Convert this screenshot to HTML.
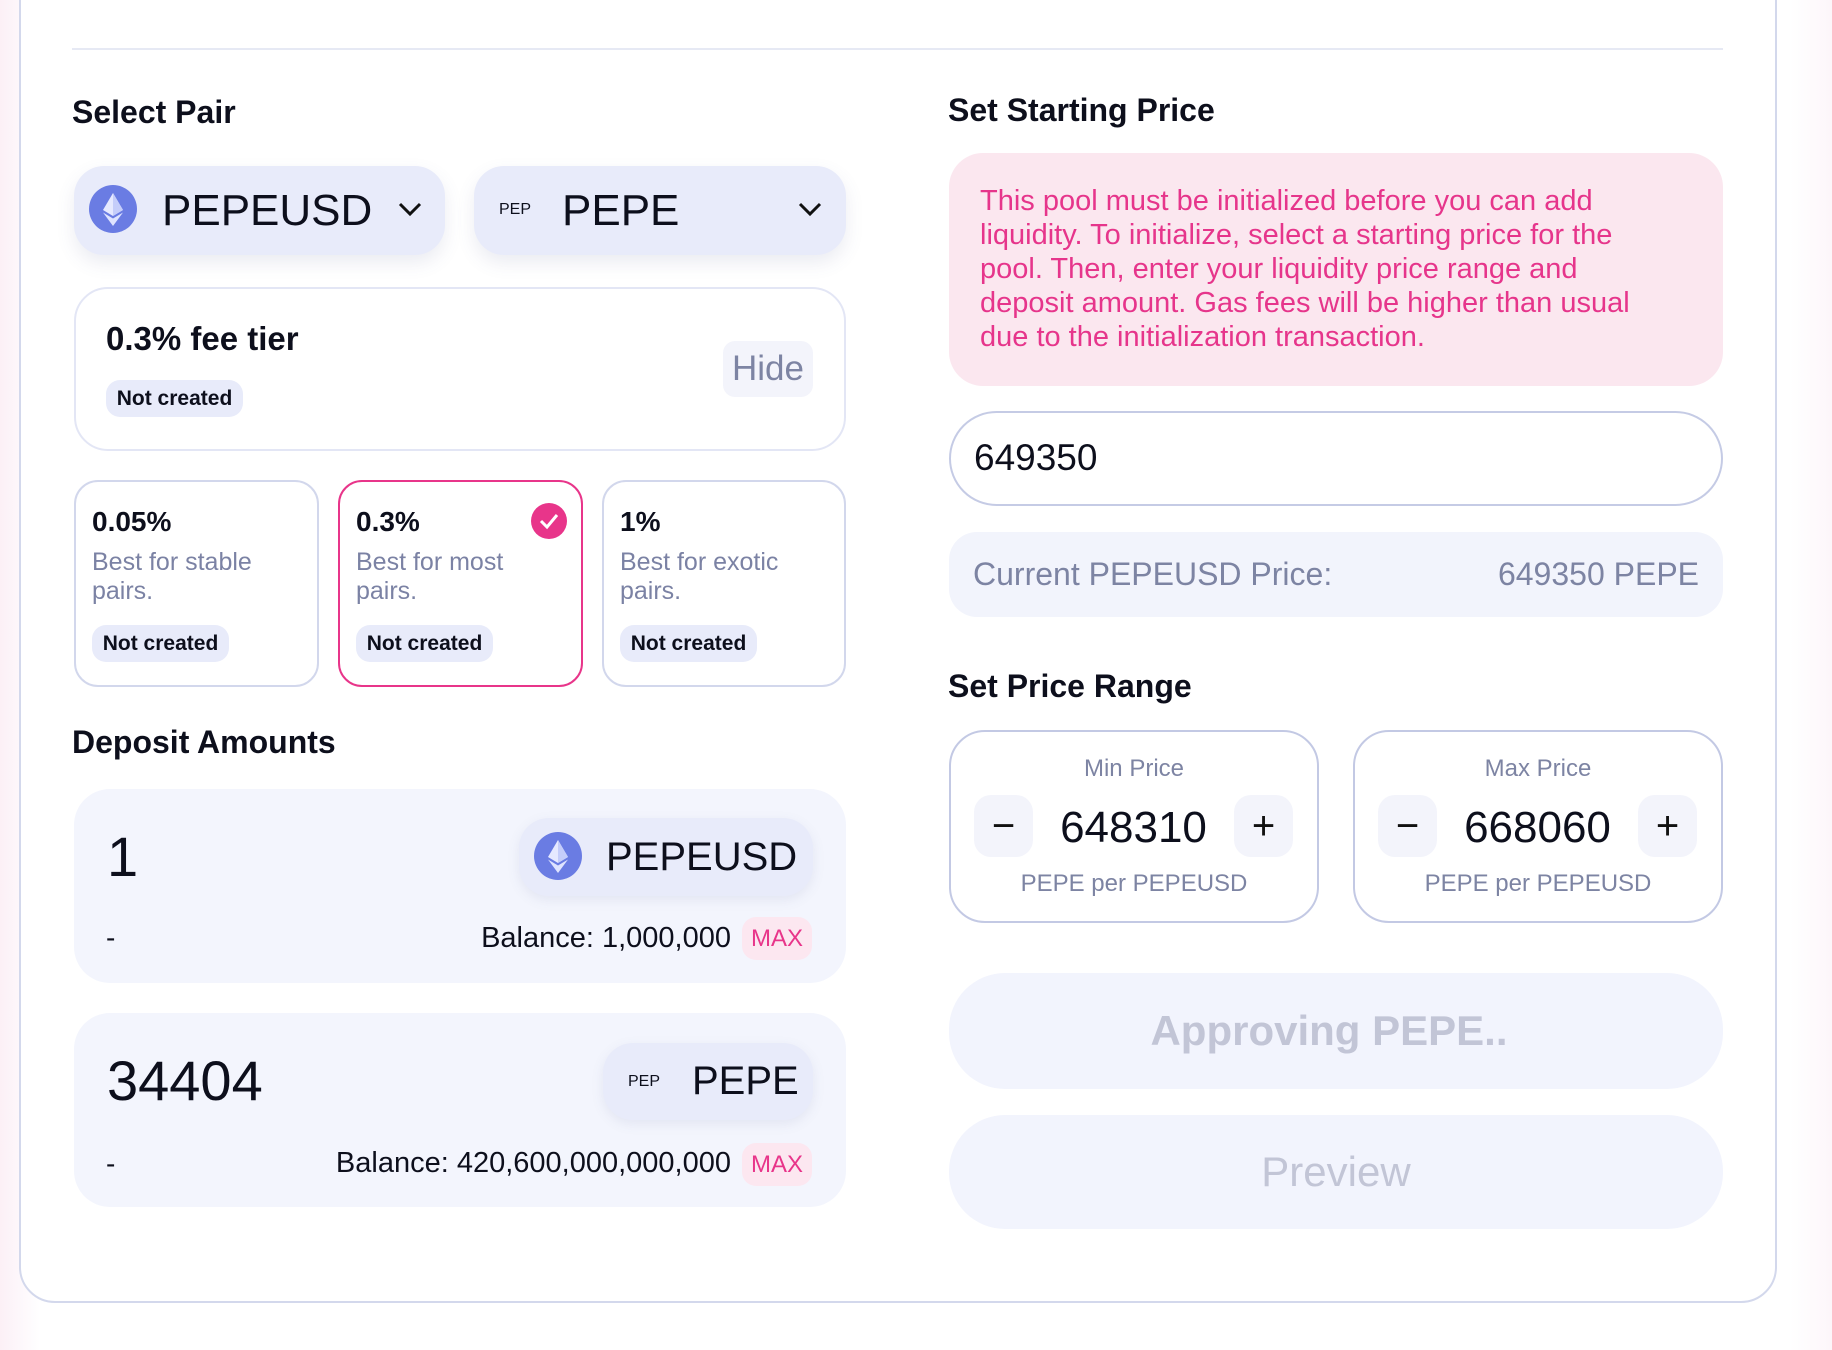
<!DOCTYPE html>
<html><head><meta charset="utf-8"><style>
*{box-sizing:border-box;margin:0;padding:0}
body{width:1832px;height:1350px;position:relative;overflow:hidden;font-family:"Liberation Sans",sans-serif;background:linear-gradient(90deg,#fcf0f6 0,#fdf7fb 19px,#fff 40px,#fff 1790px,#fdf6fa 100%);color:#0d0f1c}
.a{position:absolute}
.card{left:19px;top:-40px;width:1758px;height:1343px;border:2px solid #d3d8ec;border-radius:36px;background:#fff}
.h{font-size:32px;font-weight:700;color:#0d0f1c}
.sel{background:#e8ebfa;border-radius:30px;box-shadow:0 8px 18px rgba(90,100,150,.12)}
.pill{background:#e8ebfa;border-radius:14px;font-size:21px;font-weight:700;display:flex;align-items:center;justify-content:center}
.fee{border:2px solid #d2d7ec;border-radius:24px;background:#fff}
.fee .t{position:absolute;left:16px;top:24px;font-size:28px;font-weight:700}
.fee .d{position:absolute;left:16px;top:66px;font-size:25px;line-height:29px;color:#7b82a4}
.fee .pill{position:absolute;left:16px;top:143px;width:137px;height:37px}
.dep{background:#f3f5fd;border-radius:36px}
.max{background:#fce7f0;color:#e8358a;border-radius:14px;font-size:24px;display:flex;align-items:center;justify-content:center}
.grey{color:#7d84a3}
.rb{border:2px solid #c3c9e4;border-radius:36px;background:#fff}
.sb{background:#f3f4fb;border-radius:17px;width:59px;height:62px;display:flex;align-items:center;justify-content:center;font-size:40px;color:#111}
.big{background:#f2f4fd;border-radius:56px;display:flex;align-items:center;justify-content:center;font-size:42px;font-weight:700;color:#c2c5d6}
</style></head><body>
<div class="a card"></div>
<div class="a" style="left:72px;top:48px;width:1651px;height:2px;background:#e6e9f4"></div>

<div class="a h" style="left:72px;top:94px">Select Pair</div>
<div class="a sel" style="left:74px;top:166px;width:371px;height:89px"></div>
<svg class="a" style="left:89px;top:185px" width="48" height="48" viewBox="0 0 48 48"><circle cx="24" cy="24" r="24" fill="#6a7ce3"/><path d="M24 8 L14 25 L24 31 L34 25Z" fill="#e6e9ff"/><path d="M24 8 L24 31 L34 25Z" fill="#c5cdfa"/><path d="M14 27.5 L24 41 L34 27.5 L24 33.5Z" fill="#dfe4ff"/></svg>
<div class="a" style="left:162px;top:186px;font-size:44px">PEPEUSD</div>
<svg class="a" style="left:397px;top:200px" width="26" height="18"><path d="M3 4 L13 14 L23 4" stroke="#111" stroke-width="3" fill="none"/></svg>
<div class="a sel" style="left:474px;top:166px;width:372px;height:89px"></div>
<div class="a" style="left:499px;top:201px;font-size:16px">PEP</div>
<div class="a" style="left:562px;top:186px;font-size:44px">PEPE</div>
<svg class="a" style="left:797px;top:200px" width="26" height="18"><path d="M3 4 L13 14 L23 4" stroke="#111" stroke-width="3" fill="none"/></svg>

<div class="a" style="left:74px;top:287px;width:772px;height:164px;border:2px solid #e3e6f5;border-radius:34px"></div>
<div class="a" style="left:106px;top:320px;font-size:33px;font-weight:700">0.3% fee tier</div>
<div class="a pill" style="left:106px;top:380px;width:137px;height:37px">Not created</div>
<div class="a" style="left:723px;top:341px;width:90px;height:56px;background:#f3f4fb;border-radius:12px;font-size:35px;color:#7d84a3;display:flex;align-items:center;justify-content:center">Hide</div>

<div class="a fee" style="left:74px;top:480px;width:245px;height:207px"><div class="t">0.05%</div><div class="d">Best for stable<br>pairs.</div><div class="pill">Not created</div></div>
<div class="a fee" style="left:338px;top:480px;width:245px;height:207px;border-color:#e8358a"><div class="t">0.3%</div><div class="d">Best for most<br>pairs.</div><div class="pill">Not created</div>
<svg class="a" style="left:191px;top:21px" width="36" height="36"><circle cx="18" cy="18" r="18" fill="#e8358a"/><path d="M10 18 L16 24 L26 12" stroke="#fff" stroke-width="3" fill="none"/></svg></div>
<div class="a fee" style="left:602px;top:480px;width:244px;height:207px"><div class="t">1%</div><div class="d">Best for exotic<br>pairs.</div><div class="pill">Not created</div></div>

<div class="a h" style="left:72px;top:724px">Deposit Amounts</div>
<div class="a dep" style="left:74px;top:789px;width:772px;height:194px"></div>
<div class="a" style="left:107px;top:824px;font-size:56px;font-weight:300">1</div>
<div class="a sel" style="left:519px;top:818px;width:294px;height:78px;box-shadow:0 4px 12px rgba(90,100,150,.1)"></div>
<svg class="a" style="left:534px;top:832px" width="48" height="48" viewBox="0 0 48 48"><circle cx="24" cy="24" r="24" fill="#6a7ce3"/><path d="M24 8 L14 25 L24 31 L34 25Z" fill="#e6e9ff"/><path d="M24 8 L24 31 L34 25Z" fill="#c5cdfa"/><path d="M14 27.5 L24 41 L34 27.5 L24 33.5Z" fill="#dfe4ff"/></svg>
<div class="a" style="left:606px;top:835px;font-size:40px">PEPEUSD</div>
<div class="a" style="left:106px;top:922px;font-size:28px">-</div>
<div class="a" style="right:1101px;top:922px;font-size:29px">Balance: 1,000,000</div>
<div class="a max" style="left:742px;top:917px;width:70px;height:43px">MAX</div>

<div class="a dep" style="left:74px;top:1013px;width:772px;height:194px"></div>
<div class="a" style="left:107px;top:1048px;font-size:56px;font-weight:300">34404</div>
<div class="a sel" style="left:603px;top:1043px;width:210px;height:77px;box-shadow:0 4px 12px rgba(90,100,150,.1)"></div>
<div class="a" style="left:628px;top:1073px;font-size:16px">PEP</div>
<div class="a" style="left:692px;top:1059px;font-size:40px">PEPE</div>
<div class="a" style="left:106px;top:1148px;font-size:28px">-</div>
<div class="a" style="right:1101px;top:1147px;font-size:29px">Balance: 420,600,000,000,000</div>
<div class="a max" style="left:742px;top:1143px;width:70px;height:43px">MAX</div>

<div class="a h" style="left:948px;top:92px">Set Starting Price</div>
<div class="a" style="left:949px;top:153px;width:774px;height:233px;background:#fbe7ef;border-radius:34px;padding:31px 60px 0 31px;color:#e6358b;font-size:29px;line-height:34px">This pool must be initialized before you can add liquidity. To initialize, select a starting price for the pool. Then, enter your liquidity price range and deposit amount. Gas fees will be higher than usual due to the initialization transaction.</div>
<div class="a" style="left:949px;top:411px;width:774px;height:95px;border:2px solid #c5cbe5;border-radius:48px"></div>
<div class="a" style="left:974px;top:437px;font-size:37px">649350</div>
<div class="a" style="left:949px;top:532px;width:774px;height:85px;background:#f2f4fc;border-radius:28px"></div>
<div class="a grey" style="left:973px;top:556px;font-size:32px">Current PEPEUSD Price:</div>
<div class="a grey" style="right:133px;top:556px;font-size:32px">649350 PEPE</div>

<div class="a h" style="left:948px;top:668px">Set Price Range</div>
<div class="a rb" style="left:949px;top:730px;width:370px;height:193px"></div>
<div class="a grey" style="left:949px;top:755px;width:370px;text-align:center;font-size:24px">Min Price</div>
<div class="a sb" style="left:974px;top:795px">−</div>
<div class="a" style="left:1033px;top:803px;width:201px;text-align:center;font-size:44px">648310</div>
<div class="a sb" style="left:1234px;top:795px">+</div>
<div class="a grey" style="left:949px;top:870px;width:370px;text-align:center;font-size:24px">PEPE per PEPEUSD</div>
<div class="a rb" style="left:1353px;top:730px;width:370px;height:193px"></div>
<div class="a grey" style="left:1353px;top:755px;width:370px;text-align:center;font-size:24px">Max Price</div>
<div class="a sb" style="left:1378px;top:795px">−</div>
<div class="a" style="left:1437px;top:803px;width:201px;text-align:center;font-size:44px">668060</div>
<div class="a sb" style="left:1638px;top:795px">+</div>
<div class="a grey" style="left:1353px;top:870px;width:370px;text-align:center;font-size:24px">PEPE per PEPEUSD</div>

<div class="a big" style="left:949px;top:973px;width:774px;height:116px;padding-right:14px">Approving PEPE..</div>
<div class="a big" style="left:949px;top:1115px;width:774px;height:114px;font-weight:400">Preview</div>
</body></html>
